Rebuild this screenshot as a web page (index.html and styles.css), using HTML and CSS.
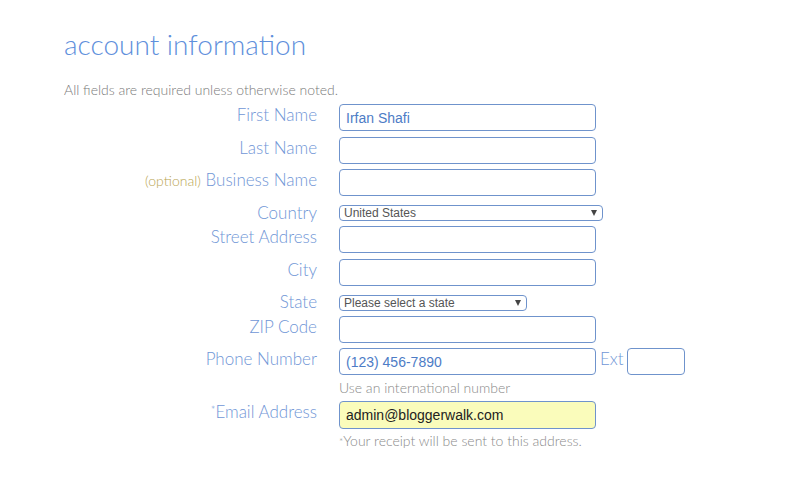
FILE: index.html
```html
<!DOCTYPE html>
<html>
<head>
<meta charset="utf-8">
<link rel="stylesheet" href="styles.css">
</head>
<body>
<div class="page">
  <h1 class="title">account information</h1>
  <p class="note">All fields are required unless otherwise noted.</p>
  <div class="form">
    <label class="lbl">First Name</label>
    <div class="field"><input class="txt" type="text" value="Irfan Shafi"></div>

    <label class="lbl">Last Name</label>
    <div class="field"><input class="txt" type="text"></div>

    <label class="lbl"><span class="opt">(optional)</span> Business Name</label>
    <div class="field"><input class="txt" type="text"></div>

    <label class="lbl lbl-sel">Country</label>
    <div class="field field-sel">
      <div class="sel sel-country"><span class="sel-text">United States</span><span class="arrow"></span></div>
    </div>

    <label class="lbl">Street Address</label>
    <div class="field"><input class="txt" type="text"></div>

    <label class="lbl">City</label>
    <div class="field"><input class="txt" type="text"></div>

    <label class="lbl lbl-sel">State</label>
    <div class="field field-sel">
      <div class="sel sel-state"><span class="sel-text">Please select a state</span><span class="arrow"></span></div>
    </div>

    <label class="lbl">ZIP Code</label>
    <div class="field"><input class="txt" type="text"></div>

    <label class="lbl">Phone Number</label>
    <div class="field field-phone">
      <div class="phone-row">
        <input class="txt" type="text" value="(123) 456-7890">
        <span class="ext-lbl">Ext</span>
        <input class="txt txt-ext" type="text">
      </div>
      <div class="hint">Use an international number</div>
    </div>

    <label class="lbl"><span class="ast">*</span>Email Address</label>
    <div class="field">
      <input class="txt txt-email" type="text" value="admin@bloggerwalk.com">
      <div class="hint hint-email"><span class="ast-hint">*</span>Your receipt will be sent to this address.</div>
    </div>
  </div>
</div>
</body>
</html>
```

FILE: styles.css
```css
html, body {
  margin: 0;
  padding: 0;
  background: #ffffff;
}

.page {
  padding: 27px 0 0 64px;
  font-family: "Lato", "Liberation Sans", sans-serif;
}

.title {
  margin: 0;
  font-size: 28px;
  line-height: 34px;
  font-weight: 300;
  color: #5f90dc;
}

.note {
  margin: 21px 0 6px 0;
  font-size: 14px;
  line-height: 16px;
  font-weight: 300;
  color: #7a7a7a;
}

.form {
  display: grid;
  grid-template-columns: 253px auto;
  column-gap: 22px;
  align-items: start;
}

.lbl {
  text-align: right;
  font-size: 17px;
  line-height: 20px;
  font-weight: 300;
  color: #7096d6;
  padding-top: 1px;
  white-space: nowrap;
}

.lbl-sel {
  margin-top: 0;
}

.opt {
  font-size: 14px;
  color: #b9a552;
}

.ast {
  font-size: 11px;
  vertical-align: top;
  position: relative;
  top: -2px;
}

.field {
  margin-bottom: 5.5px;
}

.field-sel {
  margin-top: 3.5px;
  margin-bottom: 5px;
}

.txt {
  display: block;
  box-sizing: border-box;
  width: 257px;
  height: 27px;
  margin: 0;
  padding: 0 6px;
  border: 1px solid #6f93cc;
  border-radius: 4px;
  background: #ffffff;
  font-family: "Liberation Sans", Arial, sans-serif;
  font-size: 14px;
  color: #4d7cc6;
  outline: none;
}

.sel {
  position: relative;
  box-sizing: border-box;
  height: 16px;
  border: 1px solid #6f93cc;
  border-radius: 4px;
  background: #ffffff;
  padding: 0 0 0 4px;
  font-family: "Liberation Sans", Arial, sans-serif;
  font-size: 12px;
  line-height: 14px;
  color: #555555;
}

.sel-country {
  width: 264px;
}

.sel-state {
  width: 188px;
}

.arrow {
  position: absolute;
  right: 5px;
  top: 4px;
  width: 0;
  height: 0;
  border-left: 3.5px solid transparent;
  border-right: 3.5px solid transparent;
  border-top: 6px solid #444444;
}

.field-phone {
  margin-bottom: 0;
}

.phone-row {
  display: flex;
  align-items: flex-start;
}

.ext-lbl {
  margin: 0 3px 0 4px;
  font-size: 17px;
  line-height: 20px;
  font-weight: 300;
  color: #7096d6;
  padding-top: 1px;
}

.txt-ext {
  width: 58px;
}

.hint {
  padding-top: 4px;
  height: 26px;
  box-sizing: border-box;
  font-size: 14px;
  line-height: 18px;
  font-weight: 300;
  color: #8a8a8a;
}

.txt-email {
  background: #fafcbb;
  color: #222222;
  height: 28px;
}

.hint-email {
  padding-top: 3px;
}

.ast-hint {
  font-size: 10px;
  vertical-align: top;
}
```
